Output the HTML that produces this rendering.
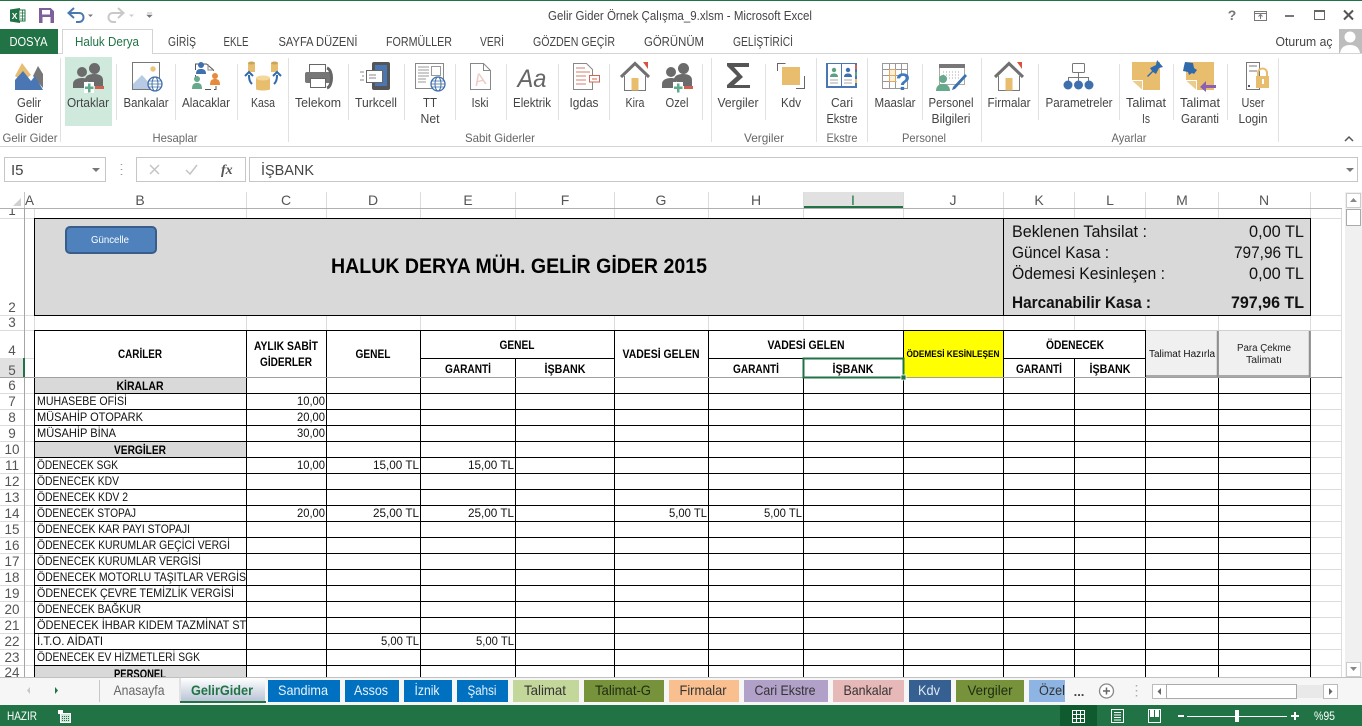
<!DOCTYPE html>
<html lang="tr"><head><meta charset="utf-8"><title>Excel</title>
<style>
html,body{margin:0;padding:0;background:#fff;width:1362px;height:726px;overflow:hidden}
svg{display:block}
text{font-family:"Liberation Sans",sans-serif;white-space:pre}
.g{font-size:12px;fill:#666;text-anchor:middle}
.tb{font-size:13px;fill:#444;text-anchor:middle}
.c{font-size:14px;fill:#555;text-anchor:middle}
.n{font-size:13.5px;fill:#555;text-anchor:middle}
.s{font-size:12px;fill:#111}
.b{font-size:12px;fill:#000;font-weight:bold;text-anchor:middle}
.e{font-size:11.500px;fill:#111;text-anchor:end}
.p{font-size:16.500px;fill:#111}
.pe{font-size:16.500px;fill:#111;text-anchor:end}
.t{font-size:12.500px;text-anchor:middle;fill:#444}
.l{font-size:14px;text-anchor:middle}
.sep{stroke:#e1e1e1;stroke-width:1}
</style></head><body>
<svg xmlns="http://www.w3.org/2000/svg" width="1362" height="726" viewBox="0 0 1362 726">
<defs>
<clipPath id="cb"><rect x="35" y="377" width="211" height="300"/></clipPath>
<clipPath id="ch"><rect x="0" y="209" width="24" height="9"/></clipPath>
<clipPath id="cs"><rect x="0" y="208" width="1342" height="469"/></clipPath>
<clipPath id="cp"><rect x="35" y="665" width="211" height="12"/></clipPath>
<linearGradient id="gg" x1="0" y1="0" x2="0" y2="1"><stop offset="0" stop-color="#fff"/><stop offset="1" stop-color="#b9c4d6"/></linearGradient>
<g id="people">
<circle cx="-6" cy="0" r="5" fill="#6b6b6b"/><circle cx="6.500" cy="-3.500" r="5.500" fill="#6b6b6b"/>
<path d="M-15 16v-4c0-4 4-6 9-6 3 0 5 .5 6 1.500-1 2-1 4-1 8.500z" fill="#6b6b6b"/>
<path d="M-3 7c1-4 5-5 9.500-5 5 0 8.500 2 8.500 6v6H4v-3H1z" fill="#6b6b6b"/>
<rect x="-4" y="10" width="10" height="11" fill="#fff"/>
<path d="M-3 14.500h3v-3h2.500v3h3V17h-3v3.500H0V17h-3z" fill="#5fab8d"/>
<rect x="7" y="14" width="9" height="3" fill="#d0604f"/>
</g>
<g id="house">
<path d="M-14 13L0-.500 14 13" fill="none" stroke="#707070" stroke-width="3"/>
<path d="M-10.500 12v14.500h21V12" fill="#fff" stroke="#777" stroke-width="1"/>
<rect x="-3.500" y="14" width="7" height="12.500" fill="#e8bd6e"/>
<path d="M8-2h5v7z" fill="#d8523f"/>
</g>
</defs>

<!-- top -->
<rect width="1362" height="1" fill="#217346"/>
<g transform="translate(10,8)">
<path d="M0 1.500L10 0v15L0 13.500z" fill="#217346"/><rect x="9" y="2" width="6" height="11" fill="#fff" stroke="#217346"/>
<path d="M10 5h5M10 8h5M10 11h5M12.500 2v11" stroke="#217346" stroke-width=".8"/>
<text x="1.700" y="11" font-size="8.500" font-weight="bold" fill="#fff">X</text>
</g>
<g transform="translate(39,8)">
<path d="M.5.500h11l3 3v11H.5z" fill="#7d5f9c" stroke="#7d5f9c"/><rect x="3" y="2" width="8" height="4.500" fill="#fff"/><rect x="3.500" y="9" width="8" height="6" fill="#fff"/>
</g>
<path d="M70 13h9c3 0 4.500 2 4.500 4.500S81.500 22 79 22h-3" fill="none" stroke="#4a78b0" stroke-width="2"/>
<path d="M74 8l-5.500 5 5.500 5" fill="none" stroke="#4a78b0" stroke-width="2"/>
<path d="M88 14.500h5l-2.500 2.500z" fill="#777"/>
<path d="M122 13h-9c-3 0-4.500 2-4.500 4.500S110.500 22 113 22h3" fill="none" stroke="#c8c8c8" stroke-width="2"/>
<path d="M118 8l5.500 5-5.500 5" fill="none" stroke="#c8c8c8" stroke-width="2"/>
<path d="M129 14.500h5l-2.500 2.500z" fill="#ccc"/>
<path d="M147 13h5M147 15h5l-2.500 2.500z" fill="#777" stroke="#777" stroke-width=".6"/>
<text x="680" y="20" font-size="12.500" fill="#444" text-anchor="middle" textLength="264" lengthAdjust="spacingAndGlyphs">Gelir Gider Örnek Çalışma_9.xlsm - Microsoft Excel</text>

<text x="1232" y="20" font-size="14" font-weight="bold" fill="#777" text-anchor="middle">?</text>
<rect x="1254.500" y="11.500" width="12" height="9" fill="none" stroke="#777"/><path d="M1254 13.500h13M1260.500 19v-4M1258.500 16.500l2-2 2 2" stroke="#777" fill="none"/>
<rect x="1285" y="15" width="9" height="2" fill="#777"/>
<rect x="1314.500" y="10.500" width="10" height="9" fill="none" stroke="#666"/><rect x="1314" y="10" width="11" height="2" fill="#666"/>
<path d="M1344 10.500l9 9M1353 10.500l-9 9" stroke="#555" stroke-width="2"/>

<!-- tabs -->
<rect x="0" y="53" width="1362" height="1" fill="#d4d4d4"/>
<rect x="0" y="29" width="58" height="25" fill="#217346"/>
<text x="28.500" y="46" font-size="13" fill="#fff" text-anchor="middle" textLength="38" lengthAdjust="spacingAndGlyphs">DOSYA</text>
<path d="M62.500 54V29.500h90V54" fill="#fff" stroke="#d4d4d4"/><rect x="63" y="53" width="89" height="1.500" fill="#fff"/>
<text x="107" y="46" font-size="13" fill="#217346" text-anchor="middle" textLength="64" lengthAdjust="spacingAndGlyphs">Haluk Derya</text>
<text class="tb" x="182" y="46" textLength="28" lengthAdjust="spacingAndGlyphs">GİRİŞ</text>
<text class="tb" x="236" y="46" textLength="25" lengthAdjust="spacingAndGlyphs">EKLE</text>
<text class="tb" x="318" y="46" textLength="79" lengthAdjust="spacingAndGlyphs">SAYFA DÜZENİ</text>
<text class="tb" x="419" y="46" textLength="66" lengthAdjust="spacingAndGlyphs">FORMÜLLER</text>
<text class="tb" x="492" y="46" textLength="24" lengthAdjust="spacingAndGlyphs">VERİ</text>
<text class="tb" x="574" y="46" textLength="82" lengthAdjust="spacingAndGlyphs">GÖZDEN GEÇİR</text>
<text class="tb" x="674" y="46" textLength="60" lengthAdjust="spacingAndGlyphs">GÖRÜNÜM</text>
<text class="tb" x="763" y="46" textLength="60" lengthAdjust="spacingAndGlyphs">GELİŞTİRİCİ</text>
<text class="tb" x="1304" y="46" textLength="57" lengthAdjust="spacingAndGlyphs">Oturum aç</text>
<rect x="1339" y="29" width="23" height="24" fill="#bdbdbd"/><circle cx="1350" cy="37" r="5.500" fill="#fff"/><path d="M1340 53c1-6 5-8 10-8s9 2 10 8z" fill="#fff"/>

<!-- ribbon -->
<rect x="0" y="146" width="1362" height="1" fill="#d4d4d4"/>
<rect x="65" y="57" width="47" height="69" fill="#cfe9dc"/>
<path class="sep" d="M60.500 58v84M288.500 58v84M711.500 58v84M816.500 58v84M867.500 58v84M981.500 58v84M1278.500 58v84"/>
<path class="sep" d="M116.500 64v56M175.500 64v56M237.500 64v56M348.500 64v56M404.500 64v56M455.500 64v56M506.500 64v56M558.500 64v56M609.500 64v56M702.500 64v56M765.500 64v56M922.500 64v56M1038.500 64v56M1119.500 64v56M1173.500 64v56M1227.500 64v56"/>

<!-- icons -->
<path d="M15 76l7-13 9 12-8 6z" fill="#e6bd72"/><path d="M33 76l5-10 5 8v14z" fill="#777"/><path d="M15 90V80l8-9 8 10 4-5 8 14z" fill="#4a77b4"/>
<use href="#people" x="88" y="72"/>
<!-- Bankalar -->
<rect x="132.500" y="62.500" width="27" height="27" fill="#fff" stroke="#777"/><circle cx="153" cy="69" r="2.700" fill="#e8c57f"/><path d="M133 89v-5l9-9 8 9 3 5z" fill="#b8cbe4"/>
<circle cx="155" cy="84" r="7" fill="#fff" stroke="#3f6fa8" stroke-width="1.300"/><ellipse cx="155" cy="84" rx="3" ry="7" fill="none" stroke="#3f6fa8"/><path d="M148 84h14M149 81h12M149 87h12" stroke="#3f6fa8" stroke-width=".8"/>
<!-- Alacaklar -->
<path d="M195.500 70v-6h11l7 6v1M195.500 75v2M205 89.500h6M216 86v3.500h-2" fill="none" stroke="#555"/><path d="M208 64v6h6" fill="none" stroke="#888"/>
<circle cx="201" cy="65" r="3" fill="#3e70ae"/><path d="M196 74c0-4 2-5 5-5s5 1 5 5z" fill="#3e70ae"/>
<circle cx="197" cy="79" r="3" fill="#67a98c"/><path d="M192 89c0-5 2-6 5-6s5 1 5 6z" fill="#67a98c"/>
<circle cx="215" cy="76" r="3" fill="#e88a3c"/><path d="M210 85c0-5 2-6 5-6s5 1 5 6z" fill="#e88a3c"/>
<!-- Kasa -->
<path d="M248 63h7v9h-7zM271 63h7v9h-7z" fill="#e8bd6e"/><ellipse cx="251.500" cy="63" rx="3.500" ry="1.500" fill="#c9a558"/><ellipse cx="274.500" cy="63" rx="3.500" ry="1.500" fill="#c9a558"/>
<path d="M256 78h14v11c0 2-14 2-14 0z" fill="#e8bd6e"/><ellipse cx="263" cy="78" rx="7" ry="2.500" fill="#f4d79a"/>
<path d="M252 84c-2-2-3-4-3-9M274 84c2-2 3-4 3-9" fill="none" stroke="#2f6aad" stroke-width="2"/><path d="M245 76l4-4 4 4M273 76l4-4 4 4" fill="none" stroke="#2f6aad" stroke-width="2"/>
<!-- Telekom -->
<rect x="309.500" y="64.500" width="16" height="9" fill="#fff" stroke="#666"/><rect x="305" y="72" width="27" height="11" rx="2" fill="#777"/><rect x="310.500" y="78.500" width="15" height="9" fill="#fff" stroke="#666"/><path d="M327 68c6 2 6 18 0 20" fill="none" stroke="#666" stroke-width="3"/>
<!-- Turkcell -->
<rect x="372" y="62" width="18" height="28" rx="2" fill="#555"/><rect x="375" y="65" width="12" height="21" fill="#4a77b4"/>
<rect x="366.500" y="70.500" width="16" height="12" fill="#fff" stroke="#666"/><path d="M369 75h7M369 78h7" stroke="#888"/><path d="M360 72h4M362 76h2M360 80h4" stroke="#888"/>
<!-- TT Net -->
<rect x="415.500" y="63.500" width="28" height="25" fill="#fff" stroke="#888"/><rect x="431.500" y="66.500" width="9" height="9" fill="#fff" stroke="#999"/><path d="M418 67h11M418 70h11M418 73h11M418 76h11M418 79h8M418 82h8" stroke="#999"/>
<circle cx="438" cy="84" r="7" fill="#fff" stroke="#3f6fa8" stroke-width="1.300"/><ellipse cx="438" cy="84" rx="3" ry="7" fill="none" stroke="#3f6fa8"/><path d="M431 84h14M432 81h12M432 87h12" stroke="#3f6fa8" stroke-width=".8"/>
<!-- Iski -->
<path d="M470.500 63.500h13l7 7v19h-20z" fill="#fff" stroke="#888"/><path d="M483.500 63.500v7h7" fill="none" stroke="#888"/><text x="480" y="85" font-size="17" fill="#eec9c4" text-anchor="middle" transform="rotate(-12 480 80)">A</text>
<!-- Elektrik -->
<text x="532" y="87" font-size="25" font-style="italic" fill="#666" text-anchor="middle" textLength="29" lengthAdjust="spacingAndGlyphs">Aa</text>
<!-- Igdas -->
<path d="M573.500 63.500h13l6 6v20h-19z" fill="#fff" stroke="#888"/><path d="M576 68h9M576 72h14M576 76h10M576 80h10M576 84h10" stroke="#d57d6d"/><rect x="589.500" y="75.500" width="10" height="6.500" fill="#fff" stroke="#d4634f"/><path d="M592 79h5" stroke="#d4634f"/>
<use href="#house" x="635" y="64"/>
<use href="#people" x="677" y="72"/>
<!-- Vergiler -->
<path d="M727 63h22v4h-15l9 10-9 8h16v3h-23v-3l10-9-10-10z" fill="#555"/>
<!-- Kdv -->
<path d="M777.500 71v-7.500h8M796 88.500h8.500V76" fill="none" stroke="#666"/><rect x="782" y="67" width="18" height="18" fill="#e8bd6e"/>
<!-- Cari -->
<rect x="826" y="63" width="31" height="25" fill="#4a77b4"/><rect x="828" y="64" width="13" height="22" fill="#fff"/><rect x="842" y="64" width="13" height="22" fill="#fff"/>
<circle cx="834" cy="70" r="2.200" fill="#5da185"/><path d="M830 77c0-3 2-3.500 4-3.500s4 .5 4 3.500z" fill="#5da185"/><circle cx="848" cy="70" r="2.200" fill="#3e70ae"/><path d="M844 77c0-3 2-3.500 4-3.500s4 .5 4 3.500z" fill="#3e70ae"/>
<path d="M830 80h8M830 83h8M844 80h8M844 83h8" stroke="#aaa"/><path d="M856 65v4" stroke="#d4634f" stroke-width="2"/><path d="M856 72v4" stroke="#5da185" stroke-width="2"/><path d="M856 79v4" stroke="#e8bd6e" stroke-width="2"/>
<!-- Maaslar -->
<path d="M882.500 63.500h25v25h-25zM882.500 69.500h25M882.500 75.500h20M882.500 81.500h14M889.500 63.500v25M895.500 63.500v25M901.500 63.500v12" fill="none" stroke="#999"/><path d="M889.500 69.500h6v6h-6zM889.500 75.500h6v6h-6z" fill="#fbf0da" stroke="#e0a860"/>
<text x="903" y="90" font-size="24" font-weight="bold" fill="#3e78bd" text-anchor="middle">?</text>
<!-- Personel -->
<rect x="939.500" y="64.500" width="25" height="20" fill="#fff" stroke="#aaa"/><rect x="939" y="64" width="26" height="4" fill="#777"/><path d="M943 72h18M943 75h18M943 78h18" stroke="#aaa" stroke-dasharray="1 2"/>
<circle cx="943" cy="79" r="4" fill="#67a98c"/><path d="M936 91c0-5 3-7 7-7s7 2 7 7z" fill="#67a98c"/>
<path d="M953 87l12-13 2 2-12 13-3 1z" fill="#3e70ae"/>
<use href="#house" x="1009" y="64"/>
<!-- Parametreler -->
<rect x="1072.500" y="63.500" width="12" height="9" rx="1" fill="#fff" stroke="#777"/><path d="M1078.500 73v4M1068.500 84v-6.500h20V84M1078.500 77v7" fill="none" stroke="#777"/>
<circle cx="1068" cy="85" r="4.500" fill="#3e70ae"/><circle cx="1078.500" cy="85" r="4.500" fill="#3e70ae"/><circle cx="1089" cy="85" r="4.500" fill="#3e70ae"/>
<!-- Talimat Is -->
<rect x="1132" y="62" width="28" height="28" fill="#e8bd6e"/><rect x="1132" y="80" width="11" height="10" fill="#fff"/><path d="M1132.500 81h9.500v8.500z" fill="#eccb8d"/>
<path d="M1157 60l6 7-4 1-3 6-3-2-5 5-1-1 5-5-2-3 6-3z" fill="#2f6aad"/>
<!-- Talimat Garanti -->
<rect x="1186" y="62" width="28" height="28" fill="#e8bd6e"/><rect x="1186" y="80" width="11" height="10" fill="#fff"/><path d="M1186.500 81h9.500v8.500z" fill="#eccb8d"/>
<path d="M1185 62l8 1 1 5 3 2-3 4-2-1-3 2-1-3-5-1 1-5z" fill="#2f6aad"/>
<path d="M1200 87l6-6v4h10v3h-10v4z" fill="#8a5fb5"/>
<!-- User Login -->
<rect x="1246.500" y="62.500" width="13" height="27" fill="#fff" stroke="#777"/><path d="M1249 66h8M1249 71h8" stroke="#777"/><rect x="1248" y="85" width="2" height="2" fill="#555"/>
<path d="M1258 76v-3c0-6 9-6 9 0v3" fill="none" stroke="#e8bd6e" stroke-width="2"/><rect x="1256" y="76" width="13" height="12" fill="#e8bd6e"/><rect x="1262" y="79" width="2" height="5" fill="#fff"/>

<!-- ribbon labels -->
<text class="t" x="29" y="107" textLength="24" lengthAdjust="spacingAndGlyphs">Gelir</text><text class="t" x="29" y="123" textLength="28" lengthAdjust="spacingAndGlyphs">Gider</text>
<text class="t" x="88" y="107" textLength="42" lengthAdjust="spacingAndGlyphs">Ortaklar</text>
<text class="t" x="146" y="107" textLength="45" lengthAdjust="spacingAndGlyphs">Bankalar</text>
<text class="t" x="206" y="107" textLength="48" lengthAdjust="spacingAndGlyphs">Alacaklar</text>
<text class="t" x="263" y="107" textLength="24" lengthAdjust="spacingAndGlyphs">Kasa</text>
<text class="t" x="318" y="107" textLength="46" lengthAdjust="spacingAndGlyphs">Telekom</text>
<text class="t" x="376" y="107" textLength="42" lengthAdjust="spacingAndGlyphs">Turkcell</text>
<text class="t" x="430" y="107" textLength="14" lengthAdjust="spacingAndGlyphs">TT</text><text class="t" x="430" y="123" textLength="19" lengthAdjust="spacingAndGlyphs">Net</text>
<text class="t" x="480" y="107" textLength="17" lengthAdjust="spacingAndGlyphs">Iski</text>
<text class="t" x="532" y="107" textLength="38" lengthAdjust="spacingAndGlyphs">Elektrik</text>
<text class="t" x="584" y="107" textLength="29" lengthAdjust="spacingAndGlyphs">Igdas</text>
<text class="t" x="635" y="107" textLength="19" lengthAdjust="spacingAndGlyphs">Kira</text>
<text class="t" x="677" y="107" textLength="23" lengthAdjust="spacingAndGlyphs">Ozel</text>
<text class="t" x="738" y="107" textLength="41" lengthAdjust="spacingAndGlyphs">Vergiler</text>
<text class="t" x="791" y="107" textLength="20" lengthAdjust="spacingAndGlyphs">Kdv</text>
<text class="t" x="842" y="107" textLength="22" lengthAdjust="spacingAndGlyphs">Cari</text><text class="t" x="842" y="123" textLength="31" lengthAdjust="spacingAndGlyphs">Ekstre</text>
<text class="t" x="895" y="107" textLength="41" lengthAdjust="spacingAndGlyphs">Maaslar</text>
<text class="t" x="951" y="107" textLength="45" lengthAdjust="spacingAndGlyphs">Personel</text><text class="t" x="951" y="123" textLength="39" lengthAdjust="spacingAndGlyphs">Bilgileri</text>
<text class="t" x="1009" y="107" textLength="43" lengthAdjust="spacingAndGlyphs">Firmalar</text>
<text class="t" x="1079" y="107" textLength="67" lengthAdjust="spacingAndGlyphs">Parametreler</text>
<text class="t" x="1146" y="107" textLength="40" lengthAdjust="spacingAndGlyphs">Talimat</text><text class="t" x="1146" y="123" textLength="8" lengthAdjust="spacingAndGlyphs">Is</text>
<text class="t" x="1200" y="107" textLength="40" lengthAdjust="spacingAndGlyphs">Talimat</text><text class="t" x="1200" y="123" textLength="38" lengthAdjust="spacingAndGlyphs">Garanti</text>
<text class="t" x="1253" y="107" textLength="23" lengthAdjust="spacingAndGlyphs">User</text><text class="t" x="1253" y="123" textLength="29" lengthAdjust="spacingAndGlyphs">Login</text>
<text class="g" x="30" y="142" textLength="55" lengthAdjust="spacingAndGlyphs">Gelir Gider</text>
<text class="g" x="175" y="142" textLength="45" lengthAdjust="spacingAndGlyphs">Hesaplar</text>
<text class="g" x="500" y="142" textLength="70" lengthAdjust="spacingAndGlyphs">Sabit Giderler</text>
<text class="g" x="764" y="142" textLength="40" lengthAdjust="spacingAndGlyphs">Vergiler</text>
<text class="g" x="842" y="142" textLength="31" lengthAdjust="spacingAndGlyphs">Ekstre</text>
<text class="g" x="924" y="142" textLength="44" lengthAdjust="spacingAndGlyphs">Personel</text>
<text class="g" x="1129" y="142" textLength="35" lengthAdjust="spacingAndGlyphs">Ayarlar</text>
<path d="M1345 141l4-4 4 4" fill="none" stroke="#555" stroke-width="1.500"/>

<!-- formula bar -->
<rect x="4.500" y="157.500" width="101" height="24" fill="#fff" stroke="#c6c6c6"/>
<text x="11" y="175" font-size="15" fill="#444">I5</text>
<path d="M92 168h8l-4 4z" fill="#777"/>
<path d="M121.500 164v1M121.500 169v1M121.500 174v1" stroke="#999" stroke-width="1.500"/>
<rect x="136.500" y="157.500" width="109" height="24" fill="#fff" stroke="#c6c6c6"/>
<path d="M150 165l9 9M159 165l-9 9" stroke="#c4c4c4" stroke-width="1.500"/>
<path d="M186 170l4 4 7-9" fill="none" stroke="#c4c4c4" stroke-width="1.500"/>
<text x="221" y="174" font-size="14" font-style="italic" font-weight="bold" fill="#555" style="font-family:'Liberation Serif',serif">fx</text>
<rect x="249.500" y="157.500" width="1108" height="24" fill="#fff" stroke="#c6c6c6"/>
<text x="261" y="175" font-size="15" fill="#444" textLength="53" lengthAdjust="spacingAndGlyphs">İŞBANK</text>
<path d="M1346 168h8l-4 4z" fill="#777"/>

<!-- column header -->
<rect x="803" y="192" width="100" height="16" fill="#e1e1e1"/>
<rect x="803" y="206" width="100" height="2" fill="#217346"/>
<path d="M13 206h8v-8z" fill="#d0d0d0"/>
<path d="M246.500 192v16M326.500 192v16M420.500 192v16M515.500 192v16M614.500 192v16M708.500 192v16M803.500 192v16M903.500 192v16M1003.500 192v16M1074.500 192v16M1145.500 192v16M1218.500 192v16M1310.500 192v16" stroke="#dcdcdc"/>
<rect x="24" y="192" width="1" height="16" fill="#c4c4c4"/>
<rect x="0" y="208" width="1342" height="1" fill="#b0b0b0"/>
<text class="c" x="29.500" y="205" textLength="9" lengthAdjust="spacingAndGlyphs">A</text><text class="c" x="140" y="205">B</text><text class="c" x="286" y="205">C</text><text class="c" x="373" y="205">D</text><text class="c" x="468" y="205">E</text><text class="c" x="565" y="205">F</text><text class="c" x="661" y="205">G</text><text class="c" x="756" y="205">H</text><text class="c" x="853" y="205" style="fill:#217346">I</text><text class="c" x="953" y="205">J</text><text class="c" x="1039" y="205">K</text><text class="c" x="1110" y="205">L</text><text class="c" x="1182" y="205">M</text><text class="c" x="1264" y="205">N</text>

<!-- sheet -->
<g clip-path="url(#cs)">
<path stroke="#dcdcdc" d="M34.500 209v469M246.500 209v469M326.500 209v469M420.500 209v469M515.500 209v469M614.500 209v469M708.500 209v469M803.500 209v469M903.500 209v469M1003.500 209v469M1074.500 209v469M1145.500 209v469M1218.500 209v469M1310.500 209v469M1341.500 209v469M0 218.500h1342M0 315.500h1342M0 330.500h1342M0 358.500h34M0 393.500h34M1310 393.500h32M0 409.500h34M1310 409.500h32M0 425.500h34M1310 425.500h32M0 441.500h34M1310 441.500h32M0 457.500h34M1310 457.500h32M0 473.500h34M1310 473.500h32M0 489.500h34M1310 489.500h32M0 505.500h34M1310 505.500h32M0 521.500h34M1310 521.500h32M0 537.500h34M1310 537.500h32M0 553.500h34M1310 553.500h32M0 569.500h34M1310 569.500h32M0 585.500h34M1310 585.500h32M0 601.500h34M1310 601.500h32M0 617.500h34M1310 617.500h32M0 633.500h34M1310 633.500h32M0 649.500h34M1310 649.500h32M0 665.500h34M1310 665.500h32"/>
<rect x="0" y="358" width="24" height="19" fill="#e1e1e1"/>
<rect x="24" y="208" width="1" height="469" fill="#a6a6a6"/>
<rect x="23" y="358" width="2" height="19" fill="#217346"/>
<rect x="34" y="218" width="1276" height="97" fill="#d9d9d9"/>
<rect x="34" y="330" width="1111" height="47" fill="#fff"/>
<rect x="34" y="377" width="1276" height="300" fill="#fff"/>
<rect x="903" y="331" width="100" height="46" fill="#ffff00"/>
<rect x="35" y="377" width="211" height="16" fill="#d9d9d9"/><rect x="35" y="441" width="211" height="16" fill="#d9d9d9"/><rect x="35" y="665" width="211" height="12" fill="#d9d9d9"/>
<rect x="1146" y="331" width="72" height="46" fill="#f0f0f0"/><rect x="1219" y="331" width="91" height="46" fill="#f0f0f0"/>
<path d="M1217.500 331v46M1146 376h72M1309.500 331v46M1219 376h91" stroke="#8f8f8f" stroke-width="1.500"/>
<path d="M1145.500 330v47M1218.500 330v47M1310.500 330v47" stroke="#999"/>
<path d="M1146 330.500h165" stroke="#d0d0d0"/>
<path stroke="#000" fill="none" d="M34.500 218.500h1276v97h-1276zM1003.500 218v97M34 330.500h1112M34.500 330v347M246.500 330v347M326.500 330v347M420.500 330v347M614.500 330v347M708.500 330v347M903.500 330v347M1003.500 330v347M1145.500 330v347M515.500 358v319M803.500 358v319M1074.500 358v319M1218.500 377v300M1310.500 377v300M420 358.500h194M708 358.500h195M1003 358.500h142M34 393.500h1277M34 409.500h1277M34 425.500h1277M34 441.500h1277M34 457.500h1277M34 473.500h1277M34 489.500h1277M34 505.500h1277M34 521.500h1277M34 537.500h1277M34 553.500h1277M34 569.500h1277M34 585.500h1277M34 601.500h1277M34 617.500h1277M34 633.500h1277M34 649.500h1277M34 665.500h1277"/>
<rect x="0" y="377" width="1342" height="1" fill="#a0a0a0"/>
<rect x="803.500" y="358.500" width="100" height="19" fill="none" stroke="#217346" stroke-width="2"/>
<rect x="901" y="375" width="5" height="5" fill="#217346" stroke="#fff" stroke-width=".8"/>
</g>

<!-- guncelle -->
<rect x="66" y="227" width="90" height="26" rx="4" fill="#4f81bd" stroke="#385d8a" stroke-width="2"/>
<text x="110" y="243" font-size="10.500" fill="#fff" text-anchor="middle" textLength="38" lengthAdjust="spacingAndGlyphs">Güncelle</text>
<text x="519" y="273" font-size="21.500" font-weight="bold" fill="#000" text-anchor="middle" textLength="376" lengthAdjust="spacingAndGlyphs">HALUK DERYA MÜH. GELİR GİDER 2015</text>

<text class="p" x="1012" y="237" textLength="135" lengthAdjust="spacingAndGlyphs">Beklenen Tahsilat :</text>
<text class="p" x="1012" y="258" textLength="97" lengthAdjust="spacingAndGlyphs">Güncel Kasa :</text>
<text class="p" x="1012" y="279" textLength="153" lengthAdjust="spacingAndGlyphs">Ödemesi Kesinleşen :</text>
<text class="p" x="1012" y="308" font-weight="bold" textLength="139" lengthAdjust="spacingAndGlyphs">Harcanabilir Kasa :</text>
<text class="pe" x="1304" y="237" textLength="55" lengthAdjust="spacingAndGlyphs">0,00 TL</text>
<text class="pe" x="1303" y="258" textLength="69" lengthAdjust="spacingAndGlyphs">797,96 TL</text>
<text class="pe" x="1304" y="279" textLength="55" lengthAdjust="spacingAndGlyphs">0,00 TL</text>
<text class="pe" x="1304" y="308" font-weight="bold" textLength="73" lengthAdjust="spacingAndGlyphs">797,96 TL</text>

<!-- headers -->
<text class="b" x="140" y="358" textLength="44" lengthAdjust="spacingAndGlyphs">CARİLER</text>
<text class="b" x="286" y="350" textLength="64" lengthAdjust="spacingAndGlyphs">AYLIK SABİT</text>
<text class="b" x="286" y="366" textLength="52" lengthAdjust="spacingAndGlyphs">GİDERLER</text>
<text class="b" x="373" y="358" textLength="35" lengthAdjust="spacingAndGlyphs">GENEL</text>
<text class="b" x="517" y="349" textLength="35" lengthAdjust="spacingAndGlyphs">GENEL</text>
<text class="b" x="468" y="373" textLength="46" lengthAdjust="spacingAndGlyphs">GARANTİ</text>
<text class="b" x="565" y="373" textLength="41" lengthAdjust="spacingAndGlyphs">İŞBANK</text>
<text class="b" x="661" y="358" textLength="77" lengthAdjust="spacingAndGlyphs">VADESİ GELEN</text>
<text class="b" x="806" y="349" textLength="77" lengthAdjust="spacingAndGlyphs">VADESİ GELEN</text>
<text class="b" x="756" y="373" textLength="46" lengthAdjust="spacingAndGlyphs">GARANTİ</text>
<text class="b" x="853" y="373" textLength="41" lengthAdjust="spacingAndGlyphs">İŞBANK</text>
<text class="b" x="953" y="357" style="font-size:9px" textLength="93" lengthAdjust="spacingAndGlyphs">ÖDEMESİ KESİNLEŞEN</text>
<text class="b" x="1075" y="349" textLength="58" lengthAdjust="spacingAndGlyphs">ÖDENECEK</text>
<text class="b" x="1039" y="373" textLength="46" lengthAdjust="spacingAndGlyphs">GARANTİ</text>
<text class="b" x="1110" y="373" textLength="41" lengthAdjust="spacingAndGlyphs">İŞBANK</text>
<text x="1182" y="357" font-size="10" fill="#111" text-anchor="middle" textLength="66" lengthAdjust="spacingAndGlyphs">Talimat Hazırla</text>
<text x="1264" y="351" font-size="10" fill="#222" text-anchor="middle" textLength="54" lengthAdjust="spacingAndGlyphs">Para Çekme</text>
<text x="1264" y="363" font-size="10" fill="#222" text-anchor="middle" textLength="36" lengthAdjust="spacingAndGlyphs">Talimatı</text>
<text class="b" x="140" y="390" textLength="47" lengthAdjust="spacingAndGlyphs">KİRALAR</text>
<text class="b" x="140" y="454" textLength="52" lengthAdjust="spacingAndGlyphs">VERGİLER</text>
<text class="b" x="140" y="678" textLength="52" lengthAdjust="spacingAndGlyphs" clip-path="url(#cp)">PERSONEL</text>

<!-- row labels -->
<g clip-path="url(#cb)">
<text class="s" x="37" y="405" textLength="90" lengthAdjust="spacingAndGlyphs">MUHASEBE OFİSİ</text>
<text class="s" x="37" y="421" textLength="106" lengthAdjust="spacingAndGlyphs">MÜSAHİP OTOPARK</text>
<text class="s" x="37" y="437" textLength="79" lengthAdjust="spacingAndGlyphs">MÜSAHİP BİNA</text>
<text class="s" x="37" y="469" textLength="81" lengthAdjust="spacingAndGlyphs">ÖDENECEK SGK</text>
<text class="s" x="37" y="485" textLength="82" lengthAdjust="spacingAndGlyphs">ÖDENECEK KDV</text>
<text class="s" x="37" y="501" textLength="91" lengthAdjust="spacingAndGlyphs">ÖDENECEK KDV 2</text>
<text class="s" x="37" y="517" textLength="99" lengthAdjust="spacingAndGlyphs">ÖDENECEK STOPAJ</text>
<text class="s" x="37" y="533" textLength="153" lengthAdjust="spacingAndGlyphs">ÖDENECEK KAR PAYI STOPAJI</text>
<text class="s" x="37" y="549" textLength="193" lengthAdjust="spacingAndGlyphs">ÖDENECEK KURUMLAR GEÇİCİ VERGİ</text>
<text class="s" x="37" y="565" textLength="164" lengthAdjust="spacingAndGlyphs">ÖDENECEK KURUMLAR VERGİSİ</text>
<text class="s" x="37" y="581" textLength="212" lengthAdjust="spacingAndGlyphs">ÖDENECEK MOTORLU TAŞITLAR VERGİSİ</text>
<text class="s" x="37" y="597" textLength="197" lengthAdjust="spacingAndGlyphs">ÖDENECEK ÇEVRE TEMİZLİK VERGİSİ</text>
<text class="s" x="37" y="613" textLength="104" lengthAdjust="spacingAndGlyphs">ÖDENECEK BAĞKUR</text>
<text class="s" x="37" y="629" textLength="240" lengthAdjust="spacingAndGlyphs">ÖDENECEK İHBAR KIDEM TAZMİNAT STOPAJI</text>
<text class="s" x="37" y="645" textLength="66" lengthAdjust="spacingAndGlyphs">İ.T.O. AİDATI</text>
<text class="s" x="37" y="661" textLength="163" lengthAdjust="spacingAndGlyphs">ÖDENECEK EV HİZMETLERİ SGK</text>
</g>
<text class="e" x="325" y="405" textLength="28" lengthAdjust="spacingAndGlyphs">10,00</text><text class="e" x="325" y="421" textLength="28" lengthAdjust="spacingAndGlyphs">20,00</text><text class="e" x="325" y="437" textLength="28" lengthAdjust="spacingAndGlyphs">30,00</text><text class="e" x="325" y="469" textLength="28" lengthAdjust="spacingAndGlyphs">10,00</text><text class="e" x="325" y="517" textLength="28" lengthAdjust="spacingAndGlyphs">20,00</text>
<text class="e" x="419" y="469" textLength="46" lengthAdjust="spacingAndGlyphs">15,00 TL</text><text class="e" x="514" y="469" textLength="46" lengthAdjust="spacingAndGlyphs">15,00 TL</text>
<text class="e" x="419" y="517" textLength="46" lengthAdjust="spacingAndGlyphs">25,00 TL</text><text class="e" x="514" y="517" textLength="46" lengthAdjust="spacingAndGlyphs">25,00 TL</text>
<text class="e" x="707" y="517" textLength="38" lengthAdjust="spacingAndGlyphs">5,00 TL</text><text class="e" x="802" y="517" textLength="38" lengthAdjust="spacingAndGlyphs">5,00 TL</text>
<text class="e" x="419" y="645" textLength="38" lengthAdjust="spacingAndGlyphs">5,00 TL</text><text class="e" x="514" y="645" textLength="38" lengthAdjust="spacingAndGlyphs">5,00 TL</text>

<!-- row numbers -->
<text class="n" x="12" y="215" clip-path="url(#ch)">1</text>
<text class="n" x="12" y="312">2</text><text class="n" x="12" y="327">3</text><text class="n" x="12" y="355">4</text><text class="n" x="12" y="375">5</text><text class="n" x="12" y="390">6</text><text class="n" x="12" y="406">7</text><text class="n" x="12" y="422">8</text><text class="n" x="12" y="438">9</text><text class="n" x="12" y="454">10</text><text class="n" x="12" y="470">11</text><text class="n" x="12" y="486">12</text><text class="n" x="12" y="502">13</text><text class="n" x="12" y="518">14</text><text class="n" x="12" y="534">15</text><text class="n" x="12" y="550">16</text><text class="n" x="12" y="566">17</text><text class="n" x="12" y="582">18</text><text class="n" x="12" y="598">19</text><text class="n" x="12" y="614">20</text><text class="n" x="12" y="630">21</text><text class="n" x="12" y="646">22</text><text class="n" x="12" y="662">23</text><text class="n" x="12" y="677">24</text>

<!-- vscroll -->
<rect x="1345" y="192" width="17" height="485" fill="#f0f0f0"/>
<rect x="1346.500" y="193.500" width="14" height="14" fill="#fff" stroke="#ccc"/><path d="M1350 202h7l-3.500-4z" fill="#888"/>
<rect x="1346.500" y="209.500" width="14" height="16" fill="#fff" stroke="#aaa"/>
<rect x="1346.500" y="662.500" width="14" height="14" fill="#fff" stroke="#ccc"/><path d="M1350 667h7l-3.500 4z" fill="#888"/>

<!-- tab bar -->
<rect x="0" y="677" width="1362" height="28" fill="#f6f6f6"/>
<rect x="0" y="677" width="1362" height="1" fill="#c0c0c0"/>
<path d="M30 687v7l-3-3.500z" fill="#c8c8c8"/><path d="M55 687v7l3-3.500z" fill="#217346"/>
<rect x="99" y="680" width="1" height="22" fill="#c8c8c8"/>
<path d="M180 677v25" stroke="#ccc"/>
<text class="l" x="139" y="695" fill="#666" textLength="51" lengthAdjust="spacingAndGlyphs">Anasayfa</text>
<rect x="181" y="678" width="84" height="23" fill="url(#gg)"/><rect x="180" y="701" width="86" height="2" fill="#217346"/>
<text class="l" x="222" y="695" font-weight="bold" fill="#217346" textLength="62" lengthAdjust="spacingAndGlyphs">GelirGider</text>
<rect x="268" y="680" width="72" height="22" fill="#0070c0"/><text class="l" fill="#e8f2fb" x="303" y="695" textLength="50" lengthAdjust="spacingAndGlyphs">Sandima</text>
<rect x="345" y="680" width="54" height="22" fill="#0070c0"/><text class="l" fill="#e8f2fb" x="371" y="695" textLength="34" lengthAdjust="spacingAndGlyphs">Assos</text>
<rect x="404" y="680" width="48" height="22" fill="#0070c0"/><text class="l" fill="#e8f2fb" x="427" y="695" textLength="25" lengthAdjust="spacingAndGlyphs">İznik</text>
<rect x="457" y="680" width="51" height="22" fill="#0070c0"/><text class="l" fill="#e8f2fb" x="482" y="695" textLength="29" lengthAdjust="spacingAndGlyphs">Şahsi</text>
<rect x="513" y="680" width="66" height="22" fill="#c4d79b"/><text class="l" fill="#333" x="545" y="695" textLength="42" lengthAdjust="spacingAndGlyphs">Talimat</text>
<rect x="584" y="680" width="80" height="22" fill="#76933c"/><text class="l" fill="#1f2a10" x="623" y="695" textLength="56" lengthAdjust="spacingAndGlyphs">Talimat-G</text>
<rect x="669" y="680" width="70" height="22" fill="#fabf8f"/><text class="l" fill="#333" x="703" y="695" textLength="47" lengthAdjust="spacingAndGlyphs">Firmalar</text>
<rect x="744" y="680" width="84" height="22" fill="#b1a0c7"/><text class="l" fill="#333" x="785" y="695" textLength="61" lengthAdjust="spacingAndGlyphs">Cari Ekstre</text>
<rect x="833" y="680" width="71" height="22" fill="#e6b8b7"/><text class="l" fill="#333" x="868" y="695" textLength="49" lengthAdjust="spacingAndGlyphs">Bankalar</text>
<rect x="909" y="680" width="42" height="22" fill="#366092"/><text class="l" fill="#dfe8f3" x="929" y="695" textLength="22" lengthAdjust="spacingAndGlyphs">Kdv</text>
<rect x="956" y="680" width="68" height="22" fill="#76933c"/><text class="l" fill="#1f2a10" x="990" y="695" textLength="45" lengthAdjust="spacingAndGlyphs">Vergiler</text>
<rect x="1029" y="680" width="36" height="22" fill="#8db4e2"/><text class="l" fill="#333" x="1052" y="695" textLength="26" lengthAdjust="spacingAndGlyphs">Özel</text>
<text x="1079" y="696" font-size="13" font-weight="bold" fill="#444" text-anchor="middle">...</text>
<circle cx="1106.500" cy="691" r="7" fill="#fff" stroke="#888" stroke-width="1.300"/><path d="M1103 691h7M1106.500 687.500v7" stroke="#666" stroke-width="1.500"/>
<path d="M1136.500 685v1.500M1136.500 690v1.500M1136.500 695v1.500" stroke="#aaa" stroke-width="1.500"/>
<rect x="1152.500" y="684.500" width="14" height="14" fill="#fff" stroke="#bbb"/><path d="M1161 688v7l-3.500-3.500z" fill="#666"/>
<rect x="1167" y="685" width="156" height="13" fill="#e9e9e9"/>
<rect x="1166.500" y="684.500" width="130" height="14" fill="#fff" stroke="#aaa"/>
<rect x="1323.500" y="684.500" width="14" height="14" fill="#fff" stroke="#bbb"/><path d="M1329 688v7l3.500-3.500z" fill="#666"/>

<!-- status bar -->
<rect x="0" y="705" width="1362" height="21" fill="#217346"/>
<text x="7" y="720" font-size="11.500" fill="#fff" textLength="30" lengthAdjust="spacingAndGlyphs">HAZIR</text>
<g transform="translate(58,710)"><rect x="0" y="0" width="5" height="4" fill="#fff"/><rect x="2.500" y="3.500" width="10" height="9" fill="#cde4d7" stroke="#fff"/><path d="M4 6.500h7M4 8.500h7M4 10.500h7" stroke="#217346" stroke-dasharray="1 1"/></g>
<rect x="1060" y="705" width="37" height="21" fill="#0f5a2f"/>
<path d="M1072.500 710.500h12v12h-12zM1072.500 714.500h12M1072.500 718.500h12M1076.500 710.500v12M1080.500 710.500v12" fill="none" stroke="#fff"/>
<path d="M1111.500 709.500h12v13h-12z" fill="none" stroke="#fff"/><path d="M1114 712.500h7M1114 715h7M1114 717.500h7M1114 720h7" stroke="#fff"/>
<path d="M1148.500 709.500h12v13h-12z" fill="none" stroke="#fff"/><rect x="1150" y="709" width="4" height="8" fill="#fff"/><rect x="1155" y="709" width="4" height="8" fill="#fff"/>
<rect x="1178" y="715" width="6" height="2" fill="#fff"/>
<rect x="1187" y="716" width="100" height="1" fill="#fff"/>
<rect x="1235" y="710" width="4" height="12" fill="#fff"/>
<path d="M1291 716h8M1295 712v8" stroke="#fff" stroke-width="2"/>
<text x="1314" y="720" font-size="11.500" fill="#fff" textLength="21" lengthAdjust="spacingAndGlyphs">%95</text>
</svg>
</body></html>
